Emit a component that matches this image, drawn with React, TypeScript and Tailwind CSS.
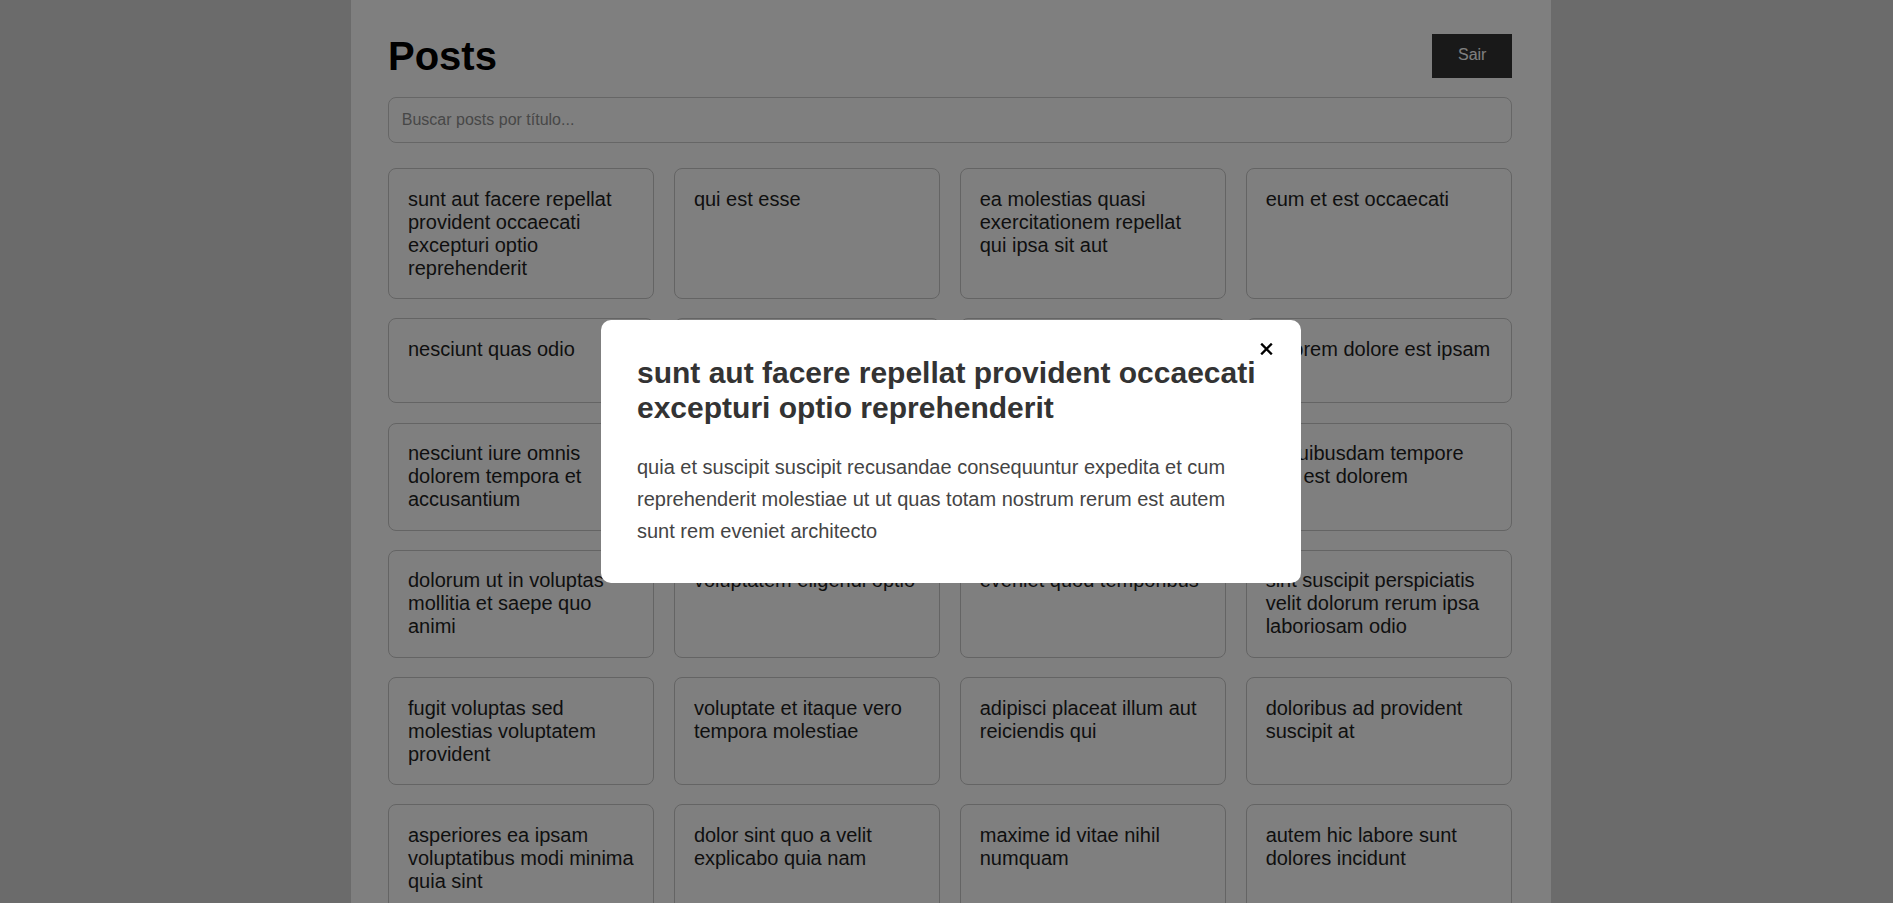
import React from "react";

const posts: string[] = [
  "sunt aut facere repellat provident occaecati excepturi optio reprehenderit",
  "qui est esse",
  "ea molestias quasi exercitationem repellat qui ipsa sit aut",
  "eum et est occaecati",
  "nesciunt quas odio",
  "dolorem eum magni eos aperiam quia",
  "magnam facilis autem",
  "dolorem dolore est ipsam",
  "nesciunt iure omnis dolorem tempora et accusantium",
  "optio molestias id quia eum",
  "et ea vero quia laudantium autem",
  "in quibusdam tempore odit est dolorem",
  "dolorum ut in voluptas mollitia et saepe quo animi",
  "voluptatem eligendi optio",
  "eveniet quod temporibus",
  "sint suscipit perspiciatis velit dolorum rerum ipsa laboriosam odio",
  "fugit voluptas sed molestias voluptatem provident",
  "voluptate et itaque vero tempora molestiae",
  "adipisci placeat illum aut reiciendis qui",
  "doloribus ad provident suscipit at",
  "asperiores ea ipsam voluptatibus modi minima quia sint",
  "dolor sint quo a velit explicabo quia nam",
  "maxime id vitae nihil numquam",
  "autem hic labore sunt dolores incidunt",
  "rem alias distinctio quo quis",
  "est et quae odit qui non",
  "quasi id et eos tenetur aut quo autem",
  "delectus ullam et corporis nulla voluptas sequi",
];

export default function App() {
  return (
    <div className="h-screen overflow-hidden bg-[#d6d6d6] font-['Liberation_Sans',Arial,sans-serif]">
      <div className="flex justify-center pl-[9px]">
        <div className="w-[1200px] bg-white pt-[32.5px] pl-[37px] pr-[39px] pb-[40px] rounded-b-[8px]">
          <header className="flex h-[46px] items-center justify-between">
            <h1 className="text-[40px] font-bold leading-[46px] text-black">Posts</h1>
            <button className="bg-[#333] px-[25.6px] py-[12.8px] text-[16px] leading-[18.4px] text-white">
              Sair
            </button>
          </header>
          <input
            type="text"
            placeholder="Buscar posts por título..."
            className="mt-[18px] box-border block h-[46px] w-full rounded-[8px] border border-[#ccc] px-[12.8px] text-[16px] text-[#222] outline-none placeholder:text-[#8f8f8f]"
          />
          <div className="mt-[25.5px] grid grid-cols-4 gap-x-[19.5px] gap-y-[19.3px]">
            {posts.map((t, i) => (
              <div
                key={i}
                className="rounded-[8px] border border-[#c8c8c8] px-[19px] py-[18.5px] text-[20px] leading-[23px] text-[#1e1e1e]"
              >
                {t}
              </div>
            ))}
          </div>
        </div>
      </div>

      <div className="fixed inset-0 flex items-center justify-center bg-black/50 pl-[9px]">
        <div className="relative w-[700px] rounded-[10px] bg-white p-[36px]">
          <button className="absolute right-[28px] top-[23px] block h-[12px] w-[13px]" aria-label="Fechar">
            <svg width="13" height="12" viewBox="0 0 13 12" className="block">
              <path d="M1.2 0.6 L11.8 11.4 M11.8 0.6 L1.2 11.4" stroke="#000" strokeWidth="2.3" strokeLinecap="butt" />
            </svg>
          </button>
          <h2 className="mb-[26px] text-[30px] font-bold leading-[34.5px] text-[#333]">
            sunt aut facere repellat provident occaecati excepturi optio reprehenderit
          </h2>
          <p className="text-[20px] leading-[32px] text-[#444]">
            quia et suscipit suscipit recusandae consequuntur expedita et cum reprehenderit molestiae ut ut quas totam nostrum rerum est autem sunt rem eveniet architecto
          </p>
        </div>
      </div>
    </div>
  );
}
